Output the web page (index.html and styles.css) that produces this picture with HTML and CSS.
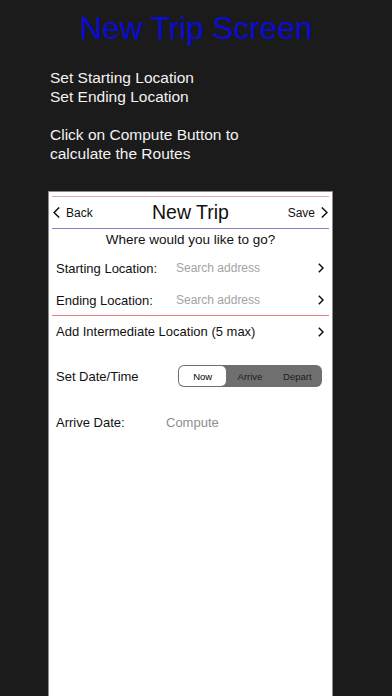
FILE: index.html
```html
<!DOCTYPE html>
<html>

<head>
  <meta name="viewport" content="width=device-width, initial-scale=1">
  <link rel="stylesheet" href="styles.css">
</head>

<body>
  <main>
    <h1 class="headline">New Trip Screen</h1>

    <div class="steps">
      <p>Set Starting Location<br>Set Ending Location</p>
      <p>Click on Compute Button to<br>calculate the Routes</p>
    </div>

    <section class="phone">
      <div class="rule rule--top"></div>

      <nav class="nav">
        <span class="nav__side">
          <svg class="chev" viewBox="0 0 7 11"><polyline points="6.2,0.5 1,5.5 6.2,10.5" /></svg>
          Back
        </span>
        <span class="nav__title">New Trip</span>
        <span class="nav__side nav__side--right">
          Save
          <svg class="chev" viewBox="0 0 7 11"><polyline points="0.8,0.5 6,5.5 0.8,10.5" /></svg>
        </span>
      </nav>

      <div class="rule rule--nav"></div>

      <p class="question">Where would you like to go?</p>

      <div class="row row--start">
        <span class="row__label">Starting Location:</span>
        <span class="row__value">Search address</span>
        <svg class="chev chev--row" viewBox="0 0 6 10"><polyline points="0.8,0.8 5,5 0.8,9.2" /></svg>
      </div>
      <div class="row row--end">
        <span class="row__label">Ending Location:</span>
        <span class="row__value">Search address</span>
        <svg class="chev chev--row" viewBox="0 0 6 10"><polyline points="0.8,0.8 5,5 0.8,9.2" /></svg>
      </div>

      <div class="rule rule--red"></div>

      <div class="row row--add">
        <span class="row__label row__label--wide">Add Intermediate Location (5 max)</span>
        <svg class="chev chev--row" viewBox="0 0 6 10"><polyline points="0.8,0.8 5,5 0.8,9.2" /></svg>
      </div>

      <div class="row row--date">
        <span class="row__label">Set Date/Time</span>
        <div class="segments">
          <span class="segment segment--on">Now</span>
          <span class="segment">Arrive</span>
          <span class="segment">Depart</span>
        </div>
      </div>

      <div class="row row--arrive">
        <span class="row__label row__label--short">Arrive Date:</span>
        <span class="row__value row__value--dark">Compute</span>
      </div>
    </section>
  </main>
</body>

</html>
```

FILE: styles.css
```css
:root {
  --page-bg: #1b1b1b;
  --title-blue: #0b0bd6;
  --text: #111;
  --muted: #a3a3a3;
}

html,
body {
  margin: 0;
  height: 100%;
  overflow: hidden;
}

body {
  background-color: var(--page-bg);
  font-family: "Liberation Sans", Arial, sans-serif;
}

main {
  display: flex;
  flex-direction: column;
  height: 100vh;
}

.headline {
  margin: 10px 0 0;
  text-align: center;
  color: var(--title-blue);
  font-size: 31.5px;
  font-weight: normal;
  line-height: 36px;
}

.steps {
  margin: 22px 0 0 50px;
  color: #f2f2f2;
  font-size: 15.5px;
  line-height: 19px;
}

.steps p {
  margin: 0 0 19px;
}

.steps p:last-child {
  margin-bottom: 0;
}

.phone {
  flex: 1;
  margin: 28px 0 0 48px;
  width: 277px;
  padding: 0 3px;
  background: #fff;
  border: 1px solid #8c8c8c;
  border-bottom: 0;
  color: var(--text);
}

.rule {
  height: 1px;
}

.rule--top {
  margin-top: 4px;
  background: #e0a9b1;
}

.rule--nav {
  background: #8a80c6;
}

.rule--red {
  background: #e48080;
}

.nav {
  height: 31px;
  display: grid;
  grid-template-columns: 1fr auto 1fr;
  align-items: center;
}

.nav__side {
  display: flex;
  align-items: center;
  gap: 6px;
  font-size: 12px;
  padding-left: 1px;
}

.nav__side--right {
  justify-content: flex-end;
  padding: 0 1px 0 0;
}

.nav__title {
  font-size: 19.5px;
}

.chev {
  width: 7px;
  height: 11px;
  fill: none;
  stroke: #111;
  stroke-width: 1.5;
}

.chev--row {
  width: 6px;
  height: 10px;
  margin-left: auto;
}

.question {
  margin: 0;
  height: 22px;
  line-height: 22px;
  text-align: center;
  font-size: 13.5px;
}

.row {
  display: flex;
  align-items: center;
  padding: 0 5px 0 4px;
  font-size: 13px;
}

.row--start {
  height: 34px;
}

.row--end {
  height: 30px;
}

.row--add {
  height: 31px;
}

.row--date {
  height: 58px;
}

.row--arrive {
  height: 34px;
}

.row__label {
  width: 120px;
}

.row__label--wide {
  width: auto;
}

.row__label--short {
  width: 110px;
}

.row__value {
  color: var(--muted);
  font-size: 12px;
}

.row__value--dark {
  color: #8e8e8e;
  font-size: 13px;
}

.segments {
  margin-left: auto;
  margin-right: 2px;
  display: flex;
  width: 144px;
  height: 22px;
  padding: 1px;
  box-sizing: border-box;
  background: #6f6f6f;
  border-radius: 6px;
}

.segment {
  flex: 1;
  display: flex;
  align-items: center;
  justify-content: center;
  font-size: 9.5px;
  color: #1e1e1e;
}

.segment--on {
  background: #fff;
  border-radius: 5px;
  color: #000;
}
```
